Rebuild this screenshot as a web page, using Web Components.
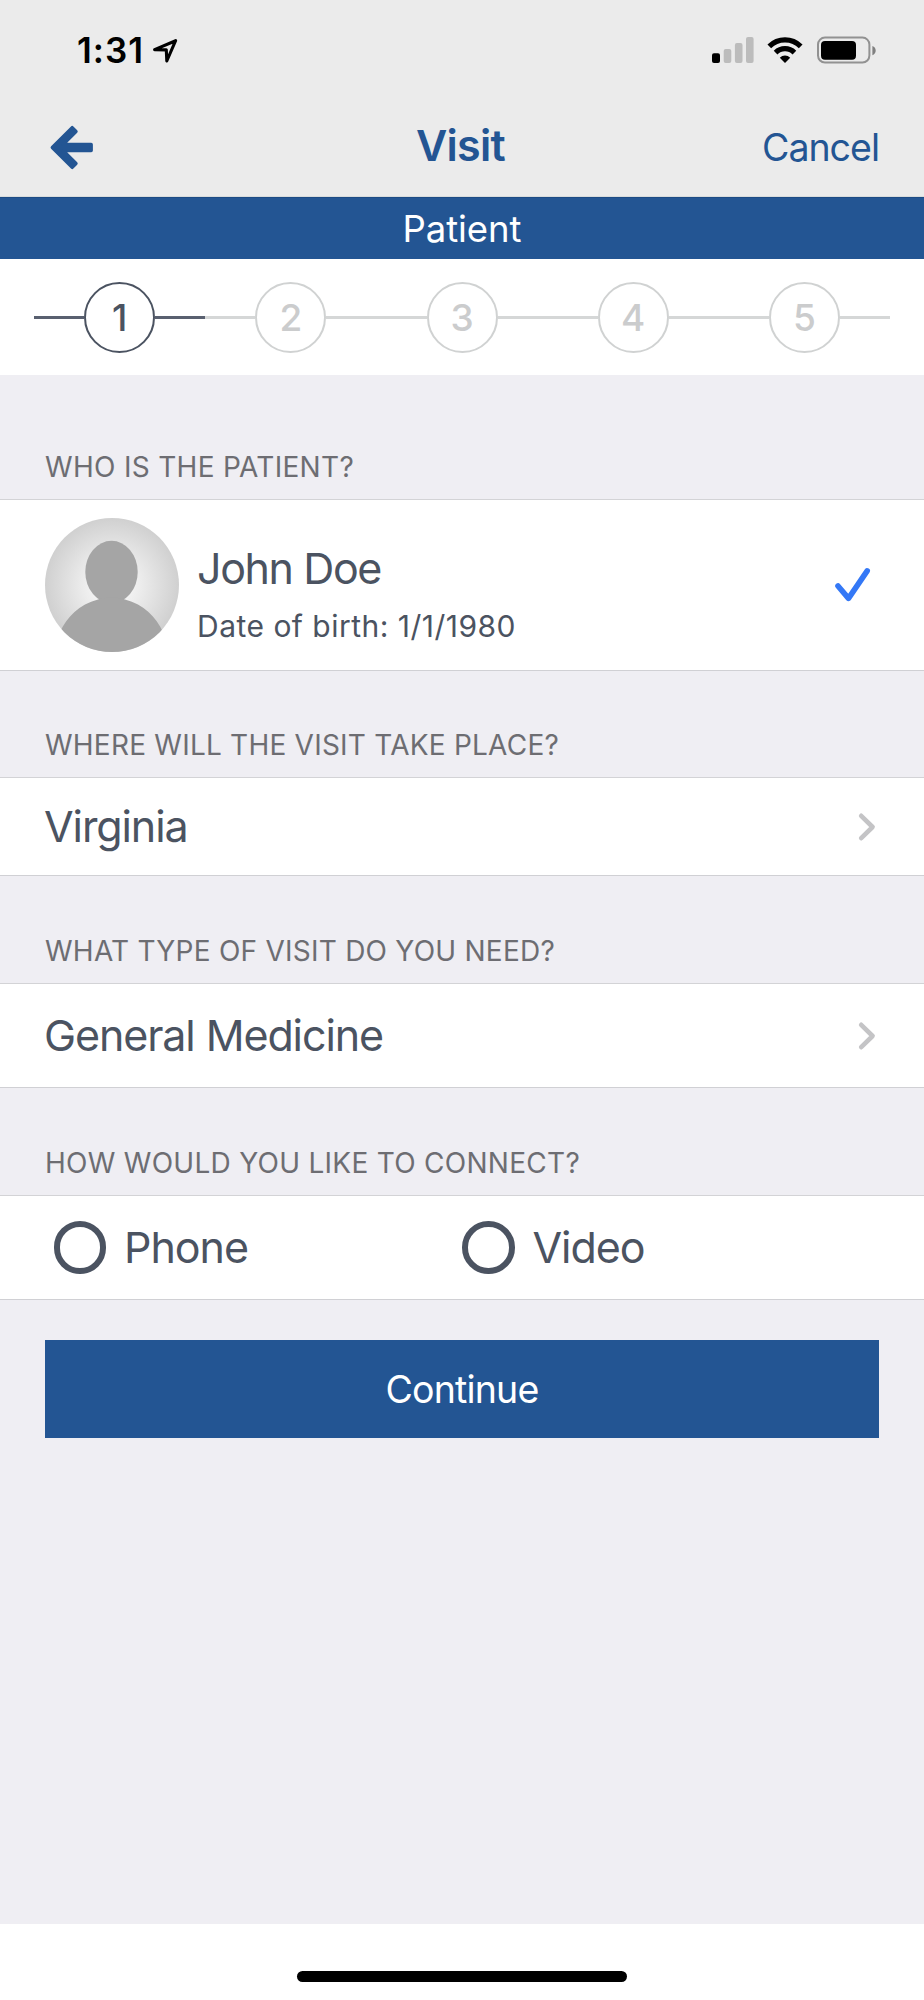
<!DOCTYPE html>
<html lang="en">
<head>
<meta charset="utf-8">
<title>Visit</title>
<style>
html,body{margin:0;padding:0}
body{background:#efeef3;font-family:Inter,"Liberation Sans",sans-serif;color:#4b5361}
</style>
</head>
<body>
<visit-app></visit-app>
<script>
const define = (name, html, ready) => {
  const tpl = document.createElement('template');
  tpl.innerHTML = html;
  customElements.define(name, class extends HTMLElement {
    connectedCallback() {
      if (this.shadowRoot) return;
      this.attachShadow({mode: 'open'}).append(tpl.content.cloneNode(true));
      if (ready) ready(this, this.shadowRoot);
    }
  });
};

/* Text run tracked so that its advance equals the "width" attribute */
define('tracked-text', `<style>
:host{display:inline-block;white-space:nowrap;line-height:1}
</style><slot></slot>`, host => {
  const n = host.textContent.length;
  const natural = host.getBoundingClientRect().width;
  const target = parseFloat(host.getAttribute('width'));
  host.style.letterSpacing = ((target - natural) / n).toFixed(3) + 'px';
});

define('status-bar', `<style>
:host{display:flex;justify-content:space-between;height:100px;box-sizing:border-box;color:#000}
.time{display:flex;align-items:center;height:101px;padding-left:77px;font-size:35px;font-weight:600}
svg{display:block}
.loc{margin-left:7px}
</style>
<div class="time"><tracked-text width="67">1:31</tracked-text>
<svg class="loc" width="28" height="28" viewBox="151 36.5 28 28"><path d="M154.6 49.1 175.6 40.2 166.8 60.5 166.3 49.4Z" fill="none" stroke="#000" stroke-width="3.1" stroke-linejoin="round"/></svg></div>
<svg width="224" height="100" viewBox="700 0 224 100">
<rect x="712" y="53.3" width="8" height="9.8" rx="2"/>
<g fill="#bcbcbc"><rect x="723.7" y="49" width="7.6" height="14.1" rx="2"/><rect x="734.9" y="43" width="7.6" height="20.1" rx="2"/><rect x="746" y="37" width="7.6" height="26.1" rx="2"/></g>
<g fill="none" stroke="#000" stroke-width="5.2"><path d="M769.3 46.3A22.2 22.2 0 0 1 800.7 46.3"/><path d="M775.6 52.6A13.3 13.3 0 0 1 794.4 52.6"/></g>
<path d="M779.8 57.8A7.3 7.3 0 0 1 790.2 57.8L785 63Z"/>
<rect x="818" y="37.6" width="51.4" height="25" rx="7" fill="none" stroke="#929292" stroke-width="2"/>
<rect x="821" y="41" width="35" height="18.8" rx="4"/>
<path d="M872.4 46c4.4 1.4 4.4 7.8 0 9.2Z" fill="#808080"/>
</svg>`);

define('nav-bar', `<style>
:host{display:grid;grid-template-columns:1fr auto 1fr;align-items:center;height:96px;padding:0 45px 0 46px;color:#235593;box-sizing:border-box}
svg{display:block;margin-left:2px}
.title{font-size:43px;font-weight:600;margin:-6px 0 0 -4px}
.cancel{justify-self:end;font-size:37.5px;margin-top:0}
</style>
<svg width="48" height="48" viewBox="48 124 48 48"><path d="M52.3 147.5 72.2 127.6 76 131.5 63.2 144.4H91.2V150.6H63.2L76 163.5 72.2 167.4Z" fill="#235593" stroke="#235593" stroke-width="3.4" stroke-linejoin="round"/></svg>
<tracked-text class="title" width="89">Visit</tracked-text>
<tracked-text class="cancel" width="117">Cancel</tracked-text>`);

define('banner-title', `<style>
:host{display:flex;align-items:center;justify-content:center;height:62px;padding-top:1px;box-sizing:border-box;background:#235593;color:#fff;font-size:36.5px;border-top:1px solid #1d4b85}
</style><tracked-text width="119">Patient</tracked-text>`);

define('progress-step', `<style>
:host{display:flex;align-items:center;flex:1;--c:#d0d2d2;--l:#d5d7d7;color:#cbcccd}
:host([active]){--c:#4b5361;--l:#596070;color:#4b5361}
i{flex:1;height:3px;background:var(--l)}
b{width:71px;height:71px;box-sizing:border-box;border:2.4px solid var(--c);border-radius:50%;display:flex;align-items:center;justify-content:center;font-size:37px;font-weight:450}
</style><i></i><b><slot></slot></b><i></i>`);

define('progress-steps', `<style>
:host{display:flex;height:116px;padding:0 34px;background:#fff;box-sizing:border-box}
</style><progress-step active>1</progress-step><progress-step>2</progress-step><progress-step>3</progress-step><progress-step>4</progress-step><progress-step>5</progress-step>`);

define('form-section', `<style>
:host{display:block}
header{display:flex;align-items:flex-end;box-sizing:border-box;height:var(--head,108px);padding:0 0 18px 45px;font-size:28px;color:#6d6d72}
.row{display:flex;align-items:center;box-sizing:border-box;height:var(--row,105px);padding:0 45px 0 44px;background:#fff;border-top:1px solid #d3d3d6;border-bottom:1px solid #d0d0d4;font-size:43px}
</style><header><slot name="title"></slot></header><div class="row"><slot></slot></div>`);

define('chevron-icon', `<style>
:host{display:block;margin-left:auto}svg{display:block}
</style><svg width="24" height="32" viewBox="855 810.5 24 32"><path d="M861.2 815.3 872.6 826.5 861.2 837.7" fill="none" stroke="#c4c4c6" stroke-width="4.6" stroke-linecap="round" stroke-linejoin="round"/></svg>`);

define('person-avatar', `<style>
:host{display:block}svg{display:block}
</style><svg width="134" height="134" viewBox="0 0 134 134"><defs><radialGradient id="g" cx=".5" cy=".5" r=".5"><stop offset="0" stop-color="#fff"/><stop offset=".45" stop-color="#ebebeb"/><stop offset="1" stop-color="#d0d0d0"/></radialGradient><clipPath id="c"><circle cx="67" cy="67" r="67"/></clipPath></defs>
<g clip-path="url(#c)"><rect width="134" height="134" fill="url(#g)"/><g fill="#a5a5a5"><ellipse cx="66.5" cy="54" rx="26.2" ry="31.2"/><path d="M53 81.5C34 86.500 22 99 15 114V134H118V114C111 99 99 86.500 80 81.500C77 79 56 79 53 81.500Z"/></g></g></svg>`);

define('patient-row', `<style>
:host{display:flex;align-items:center;flex:1;padding-left:1px}
.info{display:flex;flex-direction:column;align-items:flex-start;margin:18px 0 0 18px}
.dob{font-size:30px;margin-top:21px}
svg{display:block;margin:0 3px 0 auto}
</style><person-avatar></person-avatar>
<div class="info"><tracked-text width="184">John Doe</tracked-text><tracked-text class="dob" width="319">Date of birth: 1/1/1980</tracked-text></div>
<svg width="42" height="40" viewBox="834 565 42 40"><path d="M838 586 848.5 598.4 867.2 570.9" fill="none" stroke="#3478f6" stroke-width="5.6" stroke-linecap="round" stroke-linejoin="round"/></svg>`);

define('radio-option', `<style>
:host{display:flex;align-items:center;flex:0 0 408.500px}
i{width:52.500px;height:52.500px;box-sizing:border-box;border:6.200px solid #4b5361;border-radius:50%;margin:0 18px 0 9.500px}
</style><i></i><slot></slot>`);

define('primary-button', `<style>
:host{display:flex;align-items:center;justify-content:center;height:98px;margin:40px 45px 0;padding-top:2px;box-sizing:border-box;background:#235593;color:#fff;font-size:37.5px}
</style><slot></slot>`);

define('home-indicator', `<style>
:host{display:flex;justify-content:center;align-items:flex-start;height:76px;padding-top:47px;box-sizing:border-box;background:#fff}
i{width:330px;height:11px;border-radius:6px;background:#000}
</style><i></i>`);

define('visit-app', `<style>
:host{display:flex;flex-direction:column;width:924px;height:2000px}
.top{background:#ebebeb;height:197px;box-sizing:border-box;border-bottom:1px solid #d9dcdc}
home-indicator{margin-top:auto}
.patient{--head:124px;--row:172px}
.where{--head:106px;--row:99px}
.type{--head:107px}
.how{--head:107px}
</style>
<div class="top"><status-bar></status-bar><nav-bar></nav-bar></div>
<banner-title></banner-title>
<progress-steps></progress-steps>
<form-section class="patient"><tracked-text slot="title" width="309">WHO IS THE PATIENT?</tracked-text><patient-row></patient-row></form-section>
<form-section class="where"><tracked-text slot="title" width="514">WHERE WILL THE VISIT TAKE PLACE?</tracked-text><tracked-text width="143.5">Virginia</tracked-text><chevron-icon></chevron-icon></form-section>
<form-section class="type"><tracked-text slot="title" width="510">WHAT TYPE OF VISIT DO YOU NEED?</tracked-text><tracked-text width="339">General Medicine</tracked-text><chevron-icon></chevron-icon></form-section>
<form-section class="how"><tracked-text slot="title" width="535">HOW WOULD YOU LIKE TO CONNECT?</tracked-text><radio-option><tracked-text width="124">Phone</tracked-text></radio-option><radio-option><tracked-text width="112">Video</tracked-text></radio-option></form-section>
<primary-button><tracked-text width="153">Continue</tracked-text></primary-button>
<home-indicator></home-indicator>`);
</script>
</body>
</html>
